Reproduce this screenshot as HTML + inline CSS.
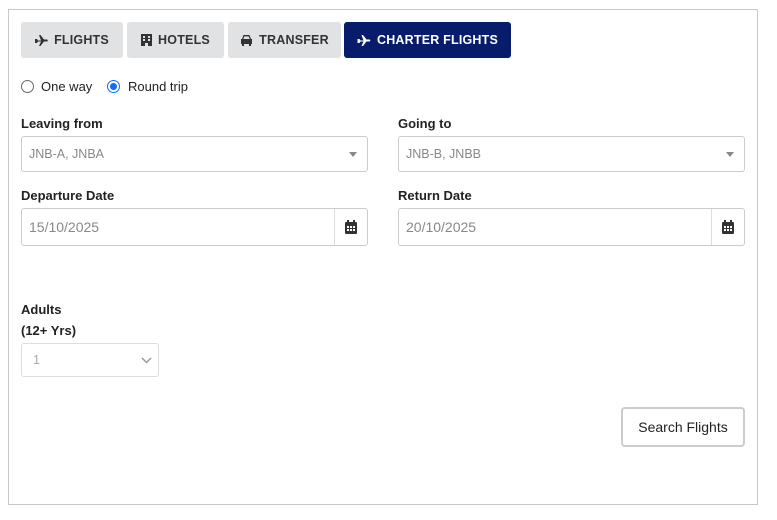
<!DOCTYPE html>
<html><head><style>
*{box-sizing:border-box;margin:0;padding:0}
body{width:777px;height:520px;background:#fff;font-family:"Liberation Sans",sans-serif;color:#222;position:relative;overflow:hidden}
.a{position:absolute}
.box{left:8px;top:9px;width:750px;height:496px;border:1px solid #c8c8c8}
.tab{top:22px;height:36px;background:#e1e2e3;border-radius:3px;font-size:12.5px;font-weight:bold;color:#333;letter-spacing:.2px;display:flex;align-items:center;justify-content:center;gap:6px}
.tab.on{background:#071d6b;color:#fff}
.lbl{font-size:13px;font-weight:bold;color:#222}
.in{border:1px solid #ccc;border-radius:3px;font-size:12.5px;color:#888;padding-left:7px;display:flex;align-items:center}
.car{position:absolute;right:10px;top:15px;width:0;height:0;border-left:4px solid transparent;border-right:4px solid transparent;border-top:5px solid #888}
.cal{position:absolute;right:0;top:0;width:33px;height:100%;border-left:1px solid #ddd;display:flex;align-items:center;justify-content:center}
</style></head><body>
<div class="a box"></div>
<div class="a tab" style="left:21px;width:102px"><svg width="13" height="11" viewBox="0 0 13 11"><path d="M0 4h2l1 1.5h3L4 0h1.5l3.5 4.5h3c1 0 1 2 0 2H9L5.5 11H4l2-4.5H3L2 8H0z" fill="#333"/></svg>FLIGHTS</div>
<div class="a tab" style="left:127px;width:97px"><svg width="11" height="12" viewBox="0 0 11 12"><path d="M0 0h11v12H7V9H4v3H0z" fill="#333"/><path d="M2 2h2v2H2zM7 2h2v2H7zM2 5h2v2H2zM7 5h2v2H7z" fill="#e1e2e3"/></svg>HOTELS</div>
<div class="a tab" style="left:228px;width:113px"><svg width="13" height="11" viewBox="0 0 13 11"><path d="M2 4l1.5-4h6L11 4h1v5h-1v2H9V9H4v2H2V9H1V4z" fill="#333"/><path d="M3.3 4l1-2.6h4.4l1 2.6z" fill="#e1e2e3"/></svg>TRANSFER</div>
<div class="a tab on" style="left:344px;width:167px"><svg width="14" height="11" viewBox="0 0 13 11"><path d="M0 4h2l1 1.5h3L4 0h1.5l3.5 4.5h3c1 0 1 2 0 2H9L5.5 11H4l2-4.5H3L2 8H0z" fill="#fff"/></svg>CHARTER FLIGHTS</div>
<div class="a" style="left:21px;top:80px;width:13px;height:13px;border:1px solid #666;border-radius:50%"></div>
<div class="a" style="left:41px;top:79px;font-size:13px">One way</div>
<div class="a" style="left:107px;top:80px;width:13px;height:13px;border:1px solid #0d6efd;border-radius:50%;background:#fff"><div style="margin:2px;width:7px;height:7px;border-radius:50%;background:#0d6efd"></div></div>
<div class="a" style="left:128px;top:79px;font-size:13px">Round trip</div>
<div class="a lbl" style="left:21px;top:116px">Leaving from</div>
<div class="a lbl" style="left:398px;top:116px">Going to</div>
<div class="a in" style="left:21px;top:136px;width:347px;height:36px">JNB-A, JNBA<span class="car"></span></div>
<div class="a in" style="left:398px;top:136px;width:347px;height:36px">JNB-B, JNBB<span class="car"></span></div>
<div class="a lbl" style="left:21px;top:188px">Departure Date</div>
<div class="a lbl" style="left:398px;top:188px">Return Date</div>
<div class="a in" style="left:21px;top:208px;width:347px;height:38px;font-size:14px">15/10/2025<span class="cal"><svg width="12" height="14" viewBox="0 0 12 14"><rect x="0" y="2" width="12" height="12" rx="1" fill="#333"/><rect x="2" y="0" width="2" height="4" fill="#333"/><rect x="8" y="0" width="2" height="4" fill="#333"/><path d="M2 6h2v2H2zM5 6h2v2H5zM8 6h2v2H8zM2 9h2v2H2zM5 9h2v2H5zM8 9h2v2H8z" fill="#fff"/></svg></span></div>
<div class="a in" style="left:398px;top:208px;width:347px;height:38px;font-size:14px">20/10/2025<span class="cal"><svg width="12" height="14" viewBox="0 0 12 14"><rect x="0" y="2" width="12" height="12" rx="1" fill="#333"/><rect x="2" y="0" width="2" height="4" fill="#333"/><rect x="8" y="0" width="2" height="4" fill="#333"/><path d="M2 6h2v2H2zM5 6h2v2H5zM8 6h2v2H8zM2 9h2v2H2zM5 9h2v2H5zM8 9h2v2H8z" fill="#fff"/></svg></span></div>
<div class="a lbl" style="left:21px;top:302px">Adults</div>
<div class="a lbl" style="left:21px;top:323px">(12+ Yrs)</div>
<div class="a in" style="left:21px;top:343px;width:138px;height:34px;border-color:#ddd;color:#aaa;padding-left:11px">1<svg style="position:absolute;right:6px;top:13px" width="11" height="7" viewBox="0 0 11 7"><path d="M1 1l4.5 4.5L10 1" stroke="#999" stroke-width="1.5" fill="none"/></svg></div>
<div class="a" style="left:621px;top:407px;width:124px;height:40px;border:2px solid #ccc;border-radius:4px;font-size:14px;color:#222;display:flex;align-items:center;justify-content:center">Search Flights</div>
</body></html>
